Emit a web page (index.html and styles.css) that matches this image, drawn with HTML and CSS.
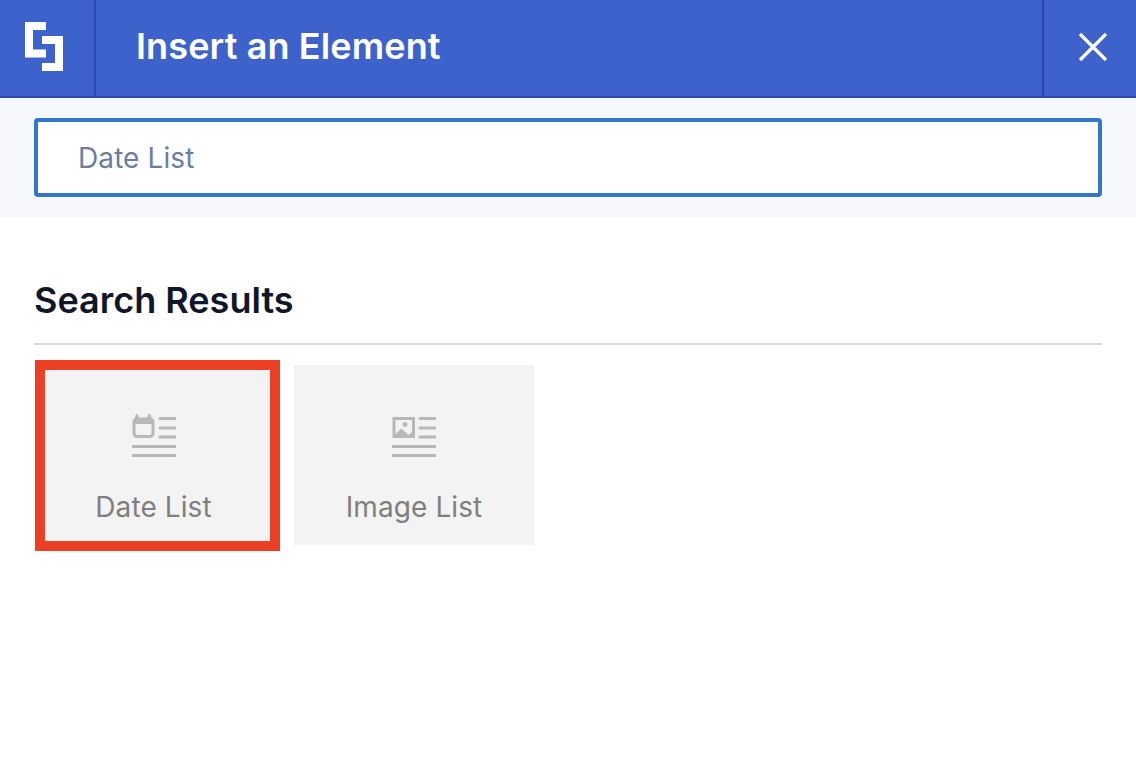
FILE: index.html
```html
<!DOCTYPE html>
<html lang="en">
<head>
    <meta charset="UTF-8">
    <meta name="viewport" content="width=device-width, initial-scale=1.0">
    <title>Insert an Element</title>
    <link rel="stylesheet" href="styles.css">
</head>
<body>

<header class="modal-header">
    <div class="logo-cell">
        <svg class="logo" width="38" height="49" viewBox="0 0 38 49">
            <path fill="#fff" d="M0 0H21V8H8V27.500H21V35.500H0Z"/>
            <path fill="#fff" d="M17 14H38V49H17V41H30V22H17Z"/>
        </svg>
    </div>
    <h1 class="modal-title">Insert an Element</h1>
    <button class="close-btn" aria-label="Close">
        <svg width="30" height="30" viewBox="0 0 30 30">
            <path stroke="#fff" stroke-width="3.2" d="M2 2L28 28M28 2L2 28"/>
        </svg>
    </button>
</header>

<div class="search-band">
    <input class="search-input" type="text" placeholder="Date List">
</div>

<main class="results">
    <h2 class="results-title">Search Results</h2>
    <div class="results-grid">
        <div class="element-card selected">
            <svg class="element-icon" width="44" height="44" viewBox="0 0 44 44">
                <path class="icon-fill" fill-rule="evenodd" d="M4 0H5.500L7 3.500H15L16.500 0H18L19.500 3.500Q22.500 5 22.500 8.500V18.500Q22.500 24 17 24H6Q0.500 24 0.500 18.500V8.500Q0.500 5 3 3.500ZM3.500 10V18.500Q3.500 21 6 21H17Q19.500 21 19.500 18.500V10Z"/>
                <path class="icon-line" d="M28 4.500H43M28 14H43M28 23H43M0.500 32.500H43M0.500 41.500H43"/>
            </svg>
            <span class="element-name">Date List</span>
        </div>
        <div class="element-card">
            <svg class="element-icon" width="44" height="44" viewBox="0 0 44 44">
                <path class="icon-fill" fill-rule="evenodd" d="M0.500 3H23V24H0.500ZM10.500 10.500A2.500 2.500 0 1 0 15.500 10.500A2.500 2.500 0 1 0 10.500 10.500ZM3.500 6H20V18L16.500 21L9.500 14.500L3.500 20Z"/>
                <path class="icon-line" d="M28 4.500H43M28 14H43M28 23H43M0.500 32.500H43M0.500 41.500H43"/>
            </svg>
            <span class="element-name">Image List</span>
        </div>
    </div>
</main>

</body>
</html>
```

FILE: styles.css
```css
body {
    font-family: Inter, "Liberation Sans", sans-serif;
    margin: 0;
    background-color: #fff;
}
.modal-header {
    display: flex;
    align-items: stretch;
    height: 96px;
    background-color: #3e62cb;
    border-bottom: 2px solid #3245b3;
}
.logo-cell {
    display: flex;
    justify-content: center;
    align-items: center;
    width: 94px;
    border-right: 2px solid #3245b3;
}
.logo {
    margin: 0 6px 3px 0;
}
.modal-title {
    flex: 1;
    margin: 0;
    padding-left: 40px;
    color: #fff;
    font-size: 36px;
    font-weight: 600;
    letter-spacing: 0.13px;
    line-height: 92px;
}
.close-btn {
    display: flex;
    justify-content: center;
    align-items: center;
    width: 94px;
    padding: 0 0 2px 6px;
    background: none;
    border: none;
    border-left: 2px solid #3245b3;
}
.search-band {
    padding: 20px 34px;
    background-color: #f6f8fc;
}
.search-input {
    display: block;
    box-sizing: border-box;
    width: 100%;
    height: 79px;
    padding: 0 40px;
    background-color: #fff;
    border: 4px solid #3277cc;
    border-radius: 4px;
    font-family: inherit;
    font-size: 28px;
    letter-spacing: 0.1px;
}
.search-input::placeholder {
    color: #6b7da0;
    opacity: 1;
}
.results {
    padding: 0 34px;
}
.results-title {
    margin: 0;
    padding: 61px 0 21px;
    color: #10172a;
    font-size: 36px;
    font-weight: 600;
    line-height: 44px;
    border-bottom: 2px solid #d9d9d9;
}
.results-grid {
    display: flex;
    align-items: flex-start;
    gap: 14px;
    padding: 15px 0 0 1px;
}
.element-card {
    display: flex;
    flex-direction: column;
    align-items: center;
    box-sizing: border-box;
    width: 240px;
    height: 180px;
    margin-top: 5px;
    padding-top: 49px;
    background-color: #f3f3f3;
}
.element-card.selected {
    width: 245px;
    height: 191px;
    margin-top: 0;
    padding: 44px 8px 0 0;
    border: 10px solid #ec4024;
}
.element-icon {
    display: block;
}
.icon-fill {
    fill: #b8b8b8;
}
.icon-line {
    fill: none;
    stroke: #b8b8b8;
    stroke-width: 3;
    stroke-linecap: round;
}
.element-name {
    margin-top: 31px;
    color: #7f7f7f;
    font-size: 28px;
    letter-spacing: 0.1px;
    line-height: 36px;
}
```
